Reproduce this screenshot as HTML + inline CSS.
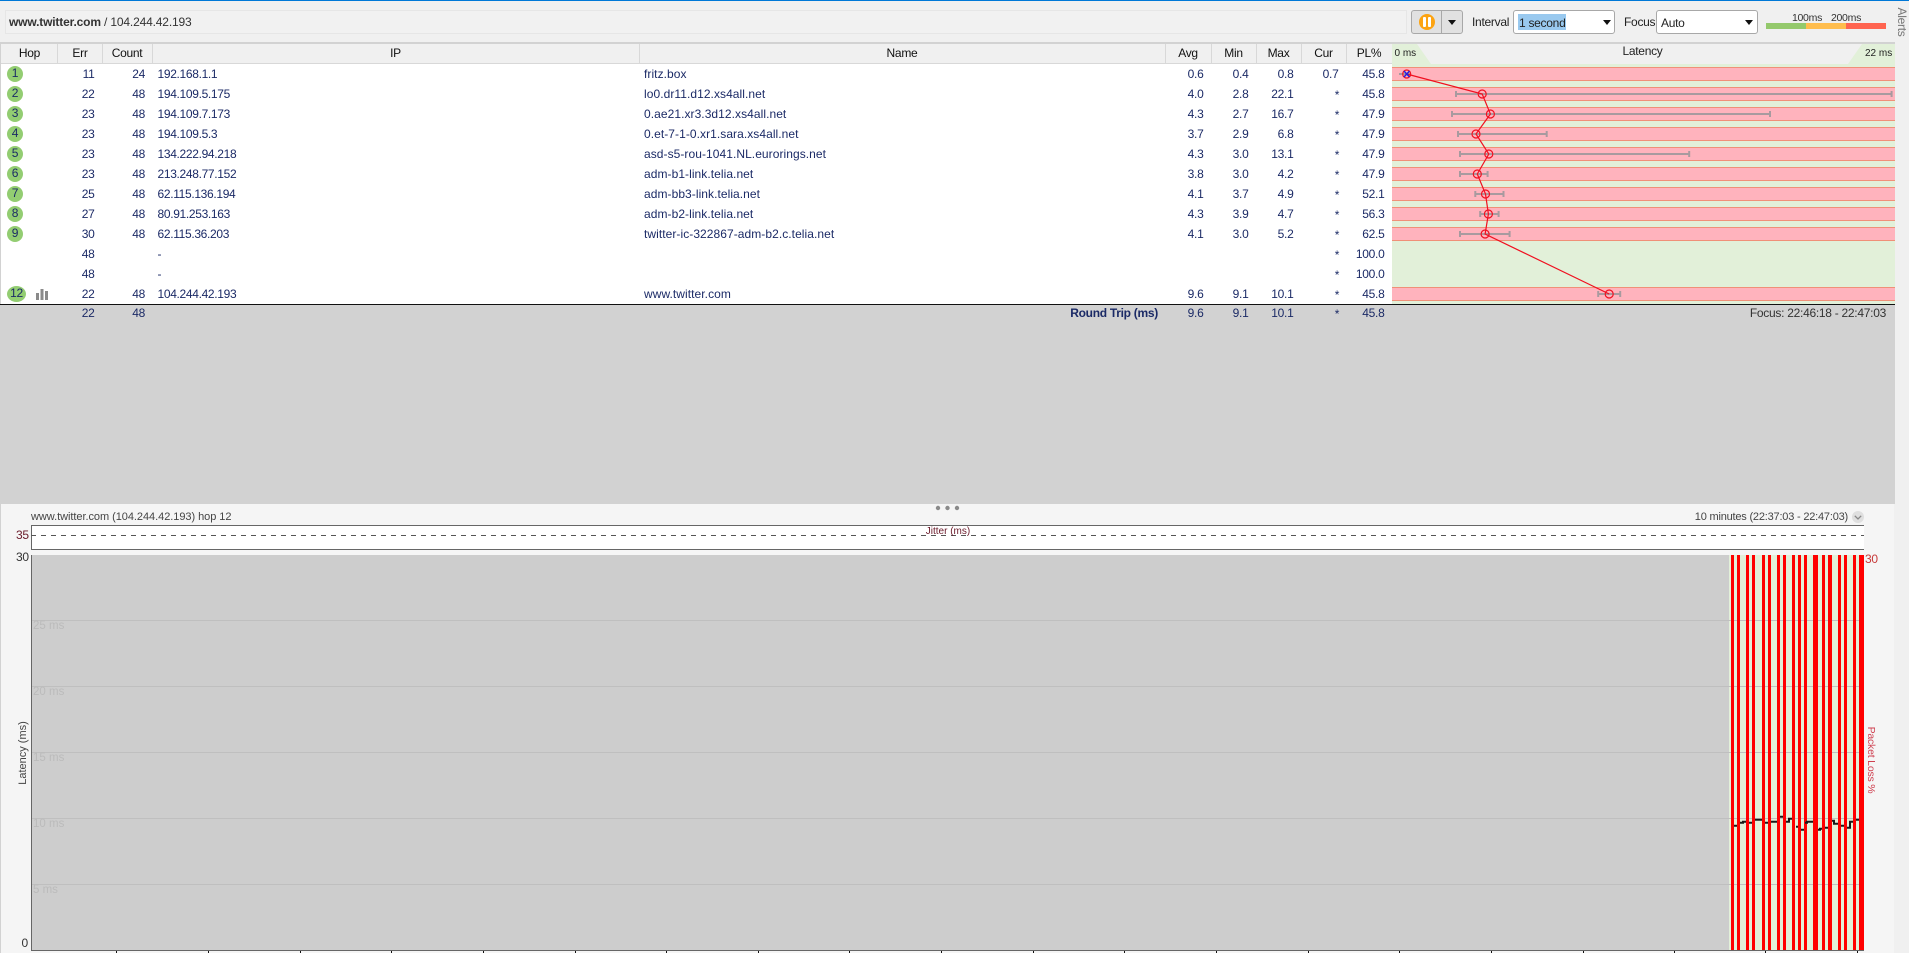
<!DOCTYPE html>
<html><head><meta charset="utf-8"><title>PingPlotter</title>
<style>
html,body{margin:0;padding:0;width:1909px;height:953px;overflow:hidden;background:#f0f0f0;font-family:"Liberation Sans",sans-serif;font-size:12px;letter-spacing:-.28px;color:#1b2a66}
div,span{position:absolute;white-space:nowrap}
.box{box-sizing:border-box}
.hd{top:44px;height:19px;line-height:18px;color:#111;text-align:center}
.dv{top:44px;width:1px;height:19px;background:#d8d8d8}
.row{left:1px;width:1391px;height:20px;line-height:20px;background:#fff}
.row span{top:0}
.err{left:50px;width:43.5px;text-align:right}
.cnt{left:100px;width:44px;text-align:right}
.ip{left:156.5px;letter-spacing:-.33px}
.nm{left:643px;letter-spacing:.06px}
.avg{left:1160px;width:42.5px;text-align:right}
.min{left:1205px;width:42.5px;text-align:right}
.max{left:1250px;width:42.5px;text-align:right}
.cur{left:1295px;width:42.5px;text-align:right}
.star{left:1331px;width:10px;text-align:center;top:1px !important}
.pl{left:1340px;width:43.5px;text-align:right}
.hop{left:6px;top:2px !important;width:16px;height:16px;border-radius:50%;background:#93cd72;text-align:center;line-height:15px;color:#1b2a66}
.sel{top:10px;height:24px;background:#fff;border:1px solid #a8a8a8;border-radius:3px;box-sizing:border-box}
.arr{width:0;height:0;border-left:4px solid transparent;border-right:4px solid transparent;border-top:5px solid #111}
.gl{font-size:11.5px;color:#bbb;letter-spacing:0}
</style></head><body>
<div style="left:0;top:0;width:1909px;height:1px;background:#0078d7"></div>

<div class="box" style="left:5px;top:10px;width:1402px;height:24px;border:1px solid #e6e6e6;background:#f1f1f1"></div>
<div style="left:9px;top:14px;line-height:16px;color:#333;letter-spacing:-.16px"><b style="color:#333">www.twitter.com</b> / 104.244.42.193</div>

<div class="box" style="left:1411px;top:10px;width:52px;height:24px;border:1px solid #a8a8a8;border-radius:3px;background:#e1e1e1"></div>
<div style="left:1441px;top:11px;width:1px;height:22px;background:#a8a8a8"></div>
<svg style="position:absolute;left:1417px;top:12px" width="20" height="20"><circle cx="10" cy="10" r="8" fill="#fca311"/><rect x="6" y="5" width="3" height="10" rx="1" fill="#fff"/><rect x="11" y="5" width="3" height="10" rx="1" fill="#fff"/></svg>
<div class="arr" style="left:1448px;top:20px"></div>
<div style="left:1472px;top:14px;line-height:16px;color:#222">Interval</div>
<div class="sel" style="left:1513px;width:102px"></div>
<div style="left:1518px;top:14px;width:48px;height:16px;background:#99c9ef"></div>
<div style="left:1519px;top:15px;line-height:16px;color:#222">1 second</div>
<div class="arr" style="left:1603px;top:20px"></div>
<div style="left:1624px;top:14px;line-height:16px;color:#222">Focus</div>
<div class="sel" style="left:1656px;width:102px"></div>
<div style="left:1661px;top:15px;line-height:16px;color:#222">Auto</div>
<div class="arr" style="left:1745px;top:20px"></div>
<div style="left:1766px;top:23px;width:40px;height:6px;background:#94c96c"></div>
<div style="left:1806px;top:23px;width:40px;height:6px;background:#ffbd4d"></div>
<div style="left:1846px;top:23px;width:40px;height:6px;background:#ff6450"></div>
<div style="left:1787px;width:40px;top:11px;text-align:center;font-size:10.5px;line-height:14px;color:#333">100ms</div>
<div style="left:1826px;width:40px;top:11px;text-align:center;font-size:10.5px;line-height:14px;color:#333">200ms</div>
<div style="left:1880px;top:15px;width:44px;height:14px;line-height:14px;text-align:center;transform:rotate(90deg);color:#777">Alerts</div>

<div style="left:0;top:42px;width:1895px;height:2px;background:#d2d2d2"></div>
<div style="left:0;top:44px;width:1px;height:261px;background:#d2d2d2"></div>
<div style="left:1px;top:44px;width:1894px;height:19px;background:#f0f0f0"></div>
<div style="left:1px;top:63px;width:1391px;height:1px;background:#d8d8d8"></div>
<div class="hd" style="left:1px;width:57px">Hop</div>
<div class="hd" style="left:58px;width:44px">Err</div>
<div class="hd" style="left:102px;width:50px">Count</div>
<div class="hd" style="left:152px;width:487px">IP</div>
<div class="hd" style="left:639px;width:526px">Name</div>
<div class="hd" style="left:1165px;width:46px">Avg</div>
<div class="hd" style="left:1211px;width:45px">Min</div>
<div class="hd" style="left:1256px;width:45px">Max</div>
<div class="hd" style="left:1301px;width:45px">Cur</div>
<div class="hd" style="left:1346px;width:46px">PL%</div>
<div class="dv" style="left:57px"></div><div class="dv" style="left:102px"></div><div class="dv" style="left:152px"></div><div class="dv" style="left:639px"></div><div class="dv" style="left:1165px"></div><div class="dv" style="left:1211px"></div><div class="dv" style="left:1256px"></div><div class="dv" style="left:1301px"></div><div class="dv" style="left:1346px"></div>

<div class="row" style="top:64px"><span class="hop">1</span><span class="err">11</span><span class="cnt">24</span><span class="ip">192.168.1.1</span><span class="nm">fritz.box</span><span class="avg">0.6</span><span class="min">0.4</span><span class="max">0.8</span><span class="cur">0.7</span><span class="pl">45.8</span></div>
<div class="row" style="top:84px"><span class="hop">2</span><span class="err">22</span><span class="cnt">48</span><span class="ip">194.109.5.175</span><span class="nm">lo0.dr11.d12.xs4all.net</span><span class="avg">4.0</span><span class="min">2.8</span><span class="max">22.1</span><span class="star">*</span><span class="pl">45.8</span></div>
<div class="row" style="top:104px"><span class="hop">3</span><span class="err">23</span><span class="cnt">48</span><span class="ip">194.109.7.173</span><span class="nm">0.ae21.xr3.3d12.xs4all.net</span><span class="avg">4.3</span><span class="min">2.7</span><span class="max">16.7</span><span class="star">*</span><span class="pl">47.9</span></div>
<div class="row" style="top:124px"><span class="hop">4</span><span class="err">23</span><span class="cnt">48</span><span class="ip">194.109.5.3</span><span class="nm">0.et-7-1-0.xr1.sara.xs4all.net</span><span class="avg">3.7</span><span class="min">2.9</span><span class="max">6.8</span><span class="star">*</span><span class="pl">47.9</span></div>
<div class="row" style="top:144px"><span class="hop">5</span><span class="err">23</span><span class="cnt">48</span><span class="ip">134.222.94.218</span><span class="nm">asd-s5-rou-1041.NL.eurorings.net</span><span class="avg">4.3</span><span class="min">3.0</span><span class="max">13.1</span><span class="star">*</span><span class="pl">47.9</span></div>
<div class="row" style="top:164px"><span class="hop">6</span><span class="err">23</span><span class="cnt">48</span><span class="ip">213.248.77.152</span><span class="nm">adm-b1-link.telia.net</span><span class="avg">3.8</span><span class="min">3.0</span><span class="max">4.2</span><span class="star">*</span><span class="pl">47.9</span></div>
<div class="row" style="top:184px"><span class="hop">7</span><span class="err">25</span><span class="cnt">48</span><span class="ip">62.115.136.194</span><span class="nm">adm-bb3-link.telia.net</span><span class="avg">4.1</span><span class="min">3.7</span><span class="max">4.9</span><span class="star">*</span><span class="pl">52.1</span></div>
<div class="row" style="top:204px"><span class="hop">8</span><span class="err">27</span><span class="cnt">48</span><span class="ip">80.91.253.163</span><span class="nm">adm-b2-link.telia.net</span><span class="avg">4.3</span><span class="min">3.9</span><span class="max">4.7</span><span class="star">*</span><span class="pl">56.3</span></div>
<div class="row" style="top:224px"><span class="hop">9</span><span class="err">30</span><span class="cnt">48</span><span class="ip">62.115.36.203</span><span class="nm">twitter-ic-322867-adm-b2.c.telia.net</span><span class="avg">4.1</span><span class="min">3.0</span><span class="max">5.2</span><span class="star">*</span><span class="pl">62.5</span></div>
<div class="row" style="top:244px"><span class="err">48</span><span class="ip">-</span><span class="star">*</span><span class="pl">100.0</span></div>
<div class="row" style="top:264px"><span class="err">48</span><span class="ip">-</span><span class="star">*</span><span class="pl">100.0</span></div>
<div class="row" style="top:284px"><span class="hop" style="width:19px">12</span><span class="err">22</span><span class="cnt">48</span><span class="ip">104.244.42.193</span><span class="nm">www.twitter.com</span><span class="avg">9.6</span><span class="min">9.1</span><span class="max">10.1</span><span class="star">*</span><span class="pl">45.8</span></div>
<svg style="position:absolute;left:36px;top:288px" width="12" height="12"><rect x="0" y="5" width="3" height="7" fill="#8a8a8a"/><rect x="4.5" y="1" width="3" height="11" fill="#8a8a8a"/><rect x="9" y="3" width="3" height="9" fill="#8a8a8a"/></svg>

<svg style="position:absolute;left:1392px;top:44px" width="503" height="260">
<rect x="0" y="20" width="503" height="240" fill="#e2f0d9"/>
<polygon points="0,0 25,0 39,20 0,20" fill="#e2f0d9"/>
<polygon points="456,20 470,0 503,0 503,20" fill="#e2f0d9"/>
<g fill="#ffb3bd" stroke="#f09078" stroke-width="1">
<rect x="-1" y="23.5" width="505" height="13"/><rect x="-1" y="43.5" width="505" height="13"/><rect x="-1" y="63.5" width="505" height="13"/><rect x="-1" y="83.5" width="505" height="13"/><rect x="-1" y="103.5" width="505" height="13"/><rect x="-1" y="123.5" width="505" height="13"/><rect x="-1" y="143.5" width="505" height="13"/><rect x="-1" y="163.5" width="505" height="13"/><rect x="-1" y="183.5" width="505" height="13"/><rect x="-1" y="243.5" width="505" height="13"/>
</g>
<g fill="none" stroke="#a89a9f" stroke-width="2">
<path d="M7 30H18"/>
<path d="M64 50H499.600M64 47v6M499.600 47v6"/>
<path d="M60 70H378M60 67v6M378 67v6"/>
<path d="M66 90H154.700M66 87v6M154.700 87v6"/>
<path d="M68 110H297.200M68 107v6M297.200 107v6"/>
<path d="M68 130H95.600M68 127v6M95.600 127v6"/>
<path d="M83.300 150H111.500M83.300 147v6M111.500 147v6"/>
<path d="M88.200 170H106.600M88.200 167v6M106.600 167v6"/>
<path d="M68 190H117.600M68 187v6M117.600 187v6"/>
<path d="M206.200 250H228.200M206.200 247v6M228.200 247v6"/>
</g>
<polyline points="14.700,30 90.200,50 98.400,70 84,90 96.800,110 85.300,130 93.500,150 96.400,170 93.100,190 217.200,250" fill="none" stroke="#f01020" stroke-width="1.200"/>
<g fill="none" stroke="#f01020" stroke-width="1.200">
<circle cx="14.700" cy="30" r="4"/><circle cx="90.200" cy="50" r="4"/><circle cx="98.400" cy="70" r="4"/><circle cx="84" cy="90" r="4"/><circle cx="96.800" cy="110" r="4"/><circle cx="85.300" cy="130" r="4"/><circle cx="93.500" cy="150" r="4"/><circle cx="96.400" cy="170" r="4"/><circle cx="93.100" cy="190" r="4"/><circle cx="217.200" cy="250" r="4"/>
</g>
<path d="M12 27l5.500 6M17.500 27l-5.500 6" stroke="#2222dd" stroke-width="1.500"/>
</svg>
<div style="left:1394.5px;top:46px;line-height:16px;font-size:10px;letter-spacing:0;color:#222">0 ms</div>
<div style="left:1865px;top:46px;line-height:16px;font-size:10px;letter-spacing:0;color:#222">22 ms</div>
<div style="left:1602.5px;top:43px;width:80px;text-align:center;line-height:16px;color:#222">Latency</div>

<div style="left:0;top:304px;width:1895px;height:1px;background:#111"></div>
<div style="left:0;top:305px;width:1895px;height:199px;background:#d2d2d2"></div>
<div class="row" style="top:303px;background:none"><span class="err">22</span><span class="cnt">48</span><span style="left:957px;width:200px;text-align:right;font-weight:bold">Round Trip (ms)</span><span class="avg">9.6</span><span class="min">9.1</span><span class="max">10.1</span><span class="star">*</span><span class="pl">45.8</span></div>
<div style="left:1686px;width:200px;top:303px;line-height:20px;text-align:right;color:#333">Focus: 22:46:18 - 22:47:03</div>

<div style="left:0;top:504px;width:1px;height:449px;background:#d2d2d2"></div>
<div style="left:1px;top:504px;width:1893px;height:449px;background:#f5f5f5"></div>
<svg style="position:absolute;left:930px;top:503px" width="36" height="10"><circle cx="8" cy="5" r="2.200" fill="#8a8a8a"/><circle cx="17.500" cy="5" r="2.200" fill="#8a8a8a"/><circle cx="27" cy="5" r="2.200" fill="#8a8a8a"/></svg>
<div style="left:31px;top:509px;line-height:16px;font-size:11px;color:#444;letter-spacing:-.05px">www.twitter.com (104.244.42.193) hop 12</div>
<div style="left:1548px;width:300px;top:509px;line-height:16px;font-size:11px;color:#444;text-align:right;letter-spacing:-.2px">10 minutes (22:37:03 - 22:47:03)</div>
<svg style="position:absolute;left:1852px;top:511px" width="12" height="12"><circle cx="6" cy="6" r="6" fill="#dfdfdf"/><path d="M2.800 4.800L6 8L9.200 4.800" fill="none" stroke="#888" stroke-width="1.300"/></svg>

<div style="left:16px;top:527px;line-height:16px;color:#6a1a2a">35</div>
<svg style="position:absolute;left:31px;top:525px" width="1833" height="25">
<rect width="1833" height="25" fill="#fff"/>
<path d="M0 .5H1833M0 24.500H1833" stroke="#666" stroke-width="1"/><path d="M.5 0V25" stroke="#666"/>
<path d="M0 10.500H1833" stroke="#555" stroke-width="1" stroke-dasharray="5 5"/>
</svg>
<div style="left:908px;width:80px;top:525px;line-height:14px;text-align:center;font-size:10px;letter-spacing:0;color:#6a1a2a">Jitter (ms)</div>

<div style="left:16px;top:549px;line-height:16px;color:#333">30</div>
<div style="left:21.500px;top:935px;line-height:16px;color:#333">0</div>
<div style="left:-17px;top:746px;width:80px;line-height:14px;text-align:center;font-size:11px;transform:rotate(-90deg);color:#444;letter-spacing:0">Latency (ms)</div>
<div style="left:1831px;top:753px;width:80px;line-height:14px;text-align:center;font-size:10.5px;transform:rotate(90deg);color:#cf4050;letter-spacing:-.2px">Packet Loss %</div>
<div style="left:1865px;top:551px;line-height:16px;color:#c83a3a">30</div>

<svg style="position:absolute;left:0;top:0" width="1909" height="953">
<rect x="32" y="555" width="1832" height="395" fill="#cdcdcd"/>
<rect x="1729" y="555" width="135" height="395" fill="#e2f0d9"/>
<g stroke="#bfbfbf" stroke-width="1"><path d="M32 620.500H1864M32 686.500H1864M32 752.500H1864M32 818.500H1864M32 884.500H1864"/></g>
<g fill="#ff0000">
<rect x="1731" y="555" width="3" height="395"/><rect x="1737" y="555" width="3" height="395"/><rect x="1746" y="555" width="3" height="395"/><rect x="1752" y="555" width="3" height="395"/><rect x="1762" y="555" width="3" height="395"/><rect x="1768" y="555" width="3" height="395"/><rect x="1777" y="555" width="3" height="395"/><rect x="1783" y="555" width="3" height="395"/><rect x="1792" y="555" width="3" height="395"/><rect x="1798" y="555" width="3" height="395"/><rect x="1804" y="555" width="3" height="395"/><rect x="1813" y="555" width="5" height="395"/><rect x="1822" y="555" width="3" height="395"/><rect x="1828" y="555" width="4" height="395"/><rect x="1838" y="555" width="3" height="395"/><rect x="1844" y="555" width="3" height="395"/><rect x="1853" y="555" width="3" height="395"/><rect x="1859" y="555" width="5" height="395"/>
</g>
<g stroke="#1a1a1a" stroke-width="2" fill="none">
<path d="M1734 825.700H1737M1740 822.700H1743V821.700H1746M1749 822.700H1752M1755 819.700H1762M1765 822.700H1768M1771 821.700H1777M1780 816.700H1783M1786 821.700H1789V818.700H1792M1796 826.700H1798M1801 829.700H1804M1805 822.700H1807V821.700H1813M1818 829.700H1820V828.700H1822M1825 827.700H1828M1832 820.700H1834V823.700H1838M1841 825.700H1844M1847 827.700H1850V821.700H1853M1856 819.700H1859"/>
</g>
<path d="M31.500 555V951" stroke="#666"/>
<path d="M31 950.500H1864" stroke="#666"/>
<g stroke="#111" stroke-width="1"><path d="M116.500 951v2M208.500 951v2M300.500 951v2M391.500 951v2M483.500 951v2M575.500 951v2M666.500 951v2M758.500 951v2M849.500 951v2M941.500 951v2M1033.500 951v2M1124.500 951v2M1216.500 951v2M1308.500 951v2M1399.500 951v2M1491.500 951v2M1583.500 951v2M1674.500 951v2M1765.500 951v2M1857.500 951v2"/></g>
</svg>
<div class="gl" style="left:33px;top:619px;line-height:14px">25 ms</div>
<div class="gl" style="left:33px;top:685px;line-height:14px">20 ms</div>
<div class="gl" style="left:33px;top:751px;line-height:14px">15 ms</div>
<div class="gl" style="left:33px;top:817px;line-height:14px">10 ms</div>
<div class="gl" style="left:33px;top:883px;line-height:14px">5 ms</div>
</body></html>
